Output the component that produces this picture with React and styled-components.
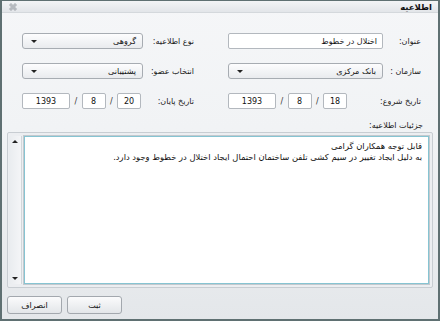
import styled, { createGlobalStyle } from "styled-components";

const GlobalStyle = createGlobalStyle`
  html, body {
    margin: 0;
    padding: 0;
    background: #ffffff;
  }
  * {
    box-sizing: border-box;
  }
`;

const Window = styled.div`
  width: 440px;
  height: 321px;
  border: 2px solid #5f7072;
  border-top-width: 1px;
  background: linear-gradient(#f5f6f8 0%, #f1f3f5 40%, #e4e7ea 100%);
  font-family: "DejaVu Sans", "Noto Sans", sans-serif;
  font-size: 8px;
  color: #111;
  display: flex;
  flex-direction: column;
`;

const TitleBar = styled.div`
  height: 12px;
  display: flex;
  align-items: center;
  justify-content: space-between;
  padding: 0 6px 0 7px;
  background: linear-gradient(#f3f4f6, #e2e5e9);
  border-bottom: 1px solid #d4d8dc;
`;

const Title = styled.span`
  font-weight: bold;
  font-size: 8.5px;
`;

const CloseIcon = styled.svg`
  width: 8px;
  height: 8px;
`;

const Body = styled.div`
  flex: 1;
  display: flex;
  flex-direction: column;
  padding: 20px 5px 5px 5px;
`;

const FormGrid = styled.div`
  display: grid;
  grid-template-columns: 193px 172px;
  column-gap: 34px;
  row-gap: 14px;
  padding: 0 12px 0 15px;
`;

const Cell = styled.div`
  display: flex;
  align-items: center;
  justify-content: space-between;
  height: 16px;
`;

const Label = styled.label`
  white-space: nowrap;
  color: #222;
`;

const TextBox = styled.div`
  width: ${(p) => p.$w}px;
  flex-shrink: 0;
  height: 16px;
  background: #fff;
  border: 1px solid #b3b8be;
  border-radius: 2px;
  display: flex;
  align-items: center;
  justify-content: ${(p) => (p.$center ? "center" : "flex-start")};
  padding: 0 5px;
`;

const Combo = styled.div`
  width: ${(p) => p.$w}px;
  height: 16px;
  background: linear-gradient(#fdfdfe, #e9ebee);
  border: 1px solid #a7acb2;
  border-radius: 3px;
  display: flex;
  align-items: center;
  justify-content: space-between;
  padding: 0 6px 0 8px;
`;

const Arrow = styled.span`
  width: 0;
  height: 0;
  border-left: 3px solid transparent;
  border-right: 3px solid transparent;
  border-${(p) => (p.$up ? "bottom" : "top")}: 3px solid #222;
`;

const DateGroup = styled.div`
  display: flex;
  align-items: center;
  width: 119px;
`;

const Slash = styled.span`
  width: 11.5px;
  text-align: center;
  color: #333;
`;

const DetailLabel = styled.div`
  margin: 12px 10px 2px 0;
  color: #222;
`;

const Panel = styled.div`
  height: 156px;
  display: flex;
  flex-direction: row-reverse;
  gap: 2px;
  padding: 3px 3px 3px 1px;
  border: 1px solid #c8cdd2;
  border-radius: 2px;
  background: #eceef1;
`;

const Scrollbar = styled.div`
  width: 13px;
  display: flex;
  flex-direction: column;
  justify-content: space-between;
  align-items: center;
  padding: 4px 0;
  background: linear-gradient(90deg, #e9ecef, #f4f5f7);
  border-right: 1px solid #d3d7db;
`;

const TextArea = styled.div`
  flex: 1;
  background: #fff;
  border: 1px solid #86c4d2;
  box-shadow: 0 0 0 1px #c4c9ce;
  padding: 4px 6px;
  line-height: 11px;
  font-size: 8.4px;
  color: #111;
`;

const Footer = styled.div`
  display: flex;
  justify-content: flex-end;
  gap: 5px;
  padding-top: 8px;
`;

const Button = styled.button`
  width: 55px;
  height: 18px;
  font-family: inherit;
  font-size: 8px;
  color: #111;
  background: linear-gradient(#fbfbfc, #e3e6e9);
  border: 1px solid #a3a8ae;
  border-radius: 3px;
  padding: 0;
`;

const App = () => {
  return (
    <>
      <GlobalStyle />
      <Window dir="rtl">
        <TitleBar>
          <Title>اطلاعیه</Title>
          <CloseIcon viewBox="0 0 8 8">
            <path
              d="M1 1h2v2h2V1h2v2H5v2h2v2H5V5H3v2H1V5h2V3H1z"
              fill="none"
              stroke="#9a9fa5"
              strokeWidth="0.8"
            />
          </CloseIcon>
        </TitleBar>
        <Body>
          <FormGrid>
            <Cell>
              <Label>عنوان:</Label>
              <TextBox $w={155}>اختلال در خطوط</TextBox>
            </Cell>
            <Cell>
              <Label>نوع اطلاعیه:</Label>
              <Combo $w={121}>
                <span>گروهی</span>
                <Arrow />
              </Combo>
            </Cell>
            <Cell>
              <Label>سازمان :</Label>
              <Combo $w={155}>
                <span>بانک مرکزی</span>
                <Arrow />
              </Combo>
            </Cell>
            <Cell>
              <Label>انتخاب عضو:</Label>
              <Combo $w={121}>
                <span>پشتیبانی</span>
                <Arrow />
              </Combo>
            </Cell>
            <Cell>
              <Label>تاریخ شروع:</Label>
              <DateGroup>
                <TextBox $w={24} $center>18</TextBox>
                <Slash>/</Slash>
                <TextBox $w={24} $center>8</TextBox>
                <Slash>/</Slash>
                <TextBox $w={48} $center>1393</TextBox>
              </DateGroup>
            </Cell>
            <Cell>
              <Label>تاریخ پایان:</Label>
              <DateGroup>
                <TextBox $w={24} $center>20</TextBox>
                <Slash>/</Slash>
                <TextBox $w={24} $center>8</TextBox>
                <Slash>/</Slash>
                <TextBox $w={48} $center>1393</TextBox>
              </DateGroup>
            </Cell>
          </FormGrid>
          <DetailLabel>جزئیات اطلاعیه:</DetailLabel>
          <Panel>
            <Scrollbar>
              <Arrow $up />
              <Arrow />
            </Scrollbar>
            <TextArea>
              قابل توجه همکاران گرامی
              <br />
              به دلیل ایجاد تغییر در سیم کشی تلفن ساختمان احتمال ایجاد اختلال در خطوط وجود دارد.
            </TextArea>
          </Panel>
          <Footer>
            <Button>ثبت</Button>
            <Button>انصراف</Button>
          </Footer>
        </Body>
      </Window>
    </>
  );
};

export default App;
